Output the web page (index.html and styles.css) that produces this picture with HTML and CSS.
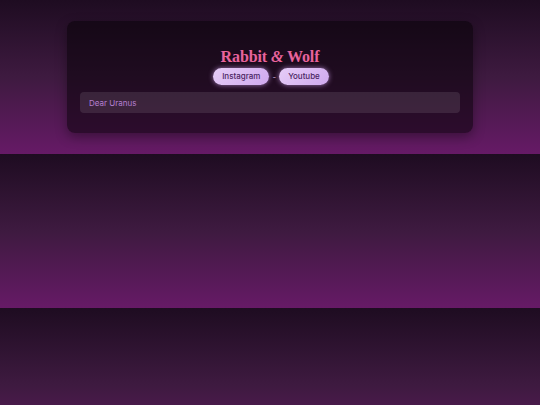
FILE: index.html
```html
<!DOCTYPE html>
<html>
<head>
<meta charset="utf-8">
<link rel="stylesheet" href="styles.css">
</head>
<body>
<main class="card">
  <h1 class="title">Rabbit <span class="amp">&amp;</span> Wolf</h1>
  <nav class="links">
    <a class="pill" href="#">Instagram</a>
    <span class="sep">-</span>
    <a class="pill" href="#">Youtube</a>
  </nav>
  <input class="field" type="text" placeholder="Dear Uranus">
</main>
</body>
</html>
```
FILE: styles.css
```css
html {
  height: 154px;
  background: linear-gradient(to bottom, #1e0c21 0%, #3e1a40 50%, #661a66 100%);
}
body {
  margin: 0;
  padding: 21px 0;
  font-family: "Inter", "Noto Sans", sans-serif;
  box-sizing: border-box;
  height: 154px;
}
.card {
  width: 406px;
  height: 112px;
  margin: 0 auto;
  box-sizing: border-box;
  padding: 26px 13px 20px;
  border-radius: 8px;
  background: rgba(8, 2, 8, 0.55);
  box-shadow: 0 4px 12px rgba(0, 0, 0, 0.35);
  display: flex;
  flex-direction: column;
  align-items: center;
}
.title {
  margin: 0;
  font-family: "Liberation Serif", "DejaVu Serif", serif;
  font-weight: bold;
  font-size: 16px;
  line-height: 19px;
  letter-spacing: -0.1px;
  color: #e8639c;
}
.amp {
  font-style: italic;
}
.links {
  display: flex;
  align-items: center;
  gap: 2px;
  margin-top: 2px;
  padding-left: 2px;
}
.pill {
  display: block;
  height: 17px;
  line-height: 17px;
  padding: 0 9px;
  border-radius: 9px;
  background: linear-gradient(135deg, #e6cdf7, #cfa8ee);
  color: #4a2462;
  font-size: 8px;
  font-weight: 500;
  text-decoration: none;
  box-shadow: 0 0 5px rgba(210, 160, 240, 0.7);
}
.sep {
  color: #c9a9d6;
  font-size: 8px;
  padding: 0 1px;
}
.field {
  align-self: stretch;
  margin-top: 7px;
  height: 21px;
  box-sizing: border-box;
  border: none;
  outline: none;
  border-radius: 4px;
  background: rgba(255, 255, 255, 0.1);
  padding: 0 9px;
  font-family: "Inter", "Noto Sans", sans-serif;
  font-size: 8px;
  color: #c088d8;
}
.field::placeholder {
  color: #b57fd0;
}
```
